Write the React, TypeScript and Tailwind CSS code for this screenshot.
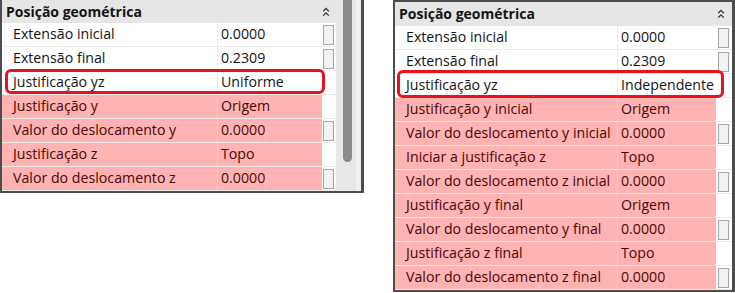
import React from 'react';

type Row = { label: string; value: string; box?: boolean; pink?: boolean; mark?: boolean };

const leftRows: Row[] = [
  { label: 'Extensão inicial', value: '0.0000', box: true },
  { label: 'Extensão final', value: '0.2309', box: true },
  { label: 'Justificação yz', value: 'Uniforme', mark: true },
  { label: 'Justificação y', value: 'Origem', pink: true },
  { label: 'Valor do deslocamento y', value: '0.0000', box: true, pink: true },
  { label: 'Justificação z', value: 'Topo', pink: true },
  { label: 'Valor do deslocamento z', value: '0.0000', box: true, pink: true },
];

const rightRows: Row[] = [
  { label: 'Extensão inicial', value: '0.0000', box: true },
  { label: 'Extensão final', value: '0.2309', box: true },
  { label: 'Justificação yz', value: 'Independente', mark: true },
  { label: 'Justificação y inicial', value: 'Origem', pink: true },
  { label: 'Valor do deslocamento y inicial', value: '0.0000', box: true, pink: true },
  { label: 'Iniciar a justificação z', value: 'Topo', pink: true },
  { label: 'Valor do deslocamento z inicial', value: '0.0000', box: true, pink: true },
  { label: 'Justificação y final', value: 'Origem', pink: true },
  { label: 'Valor do deslocamento y final', value: '0.0000', box: true, pink: true },
  { label: 'Justificação z final', value: 'Topo', pink: true },
  { label: 'Valor do deslocamento z final', value: '0.0000', box: true, pink: true },
];

function CollapseIcon() {
  return (
    <svg width="8" height="10" viewBox="0 0 8 10" fill="none" stroke="#333" strokeWidth="1.3">
      <path d="M1.2 4.2 L4 1.4 L6.8 4.2" />
      <path d="M1.2 8.6 L4 5.8 L6.8 8.6" />
    </svg>
  );
}

function PropRow({ row, wide }: { row: Row; wide?: boolean }) {
  const line = row.pink ? 'border-[#ffc6c6]' : 'border-[#ebebeb]';
  return (
    <div className="relative flex h-[24px] border-b border-[#ebebeb]">
      <div
        className={`flex items-center pl-[11px] whitespace-nowrap border-r ${line} ${
          wide ? 'w-[223px]' : 'w-[216px]'
        } ${row.pink ? 'bg-[#ffb3b3] text-[#4c0606]' : 'text-[#141414]'}`}
      >
        {row.label}
      </div>
      <div
        className={`flex items-center pl-[3px] whitespace-nowrap ${wide ? 'w-[98px]' : 'w-[104px]'} ${
          row.pink ? 'bg-[#ffb3b3] text-[#4c0606]' : 'text-[#141414]'
        }`}
      >
        {row.value}
      </div>
      <div className={`flex ${wide ? 'w-[16px] pl-[2px]' : 'w-[14px] pl-[1px]'} pt-[2px] pb-[1px]`}>
        {row.box && <div className="w-[11px] h-full border border-[#a6a6a6] bg-[#f2f2f2]" />}
      </div>
      {row.mark && (
        <div
          className={`absolute border-[3px] border-[#e3141c] rounded-[6px] ${
            wide ? 'left-[2px] right-[8px] top-[-4px] bottom-[-1px]' : 'left-[3px] right-[11px] top-[-2px] bottom-[0px]'
          }`}
        />
      )}
    </div>
  );
}

function Header({ wide }: { wide?: boolean }) {
  return (
    <div
      className={`flex items-center justify-between bg-[#e6e6e6] pl-[4px] ${
        wide ? 'h-[24px] pr-[7px]' : 'h-[23px] pr-[6px]'
      }`}
    >
      <span className="font-bold text-[14px] text-[#141414]">Posição geométrica</span>
      <CollapseIcon />
    </div>
  );
}

export default function App() {
  return (
    <div
      className="w-[735px] h-[293px] bg-white flex items-start text-[14.2px] leading-none"
      style={{ fontFamily: '"Open Sans", "Noto Sans", sans-serif' }}
    >
      {/* Left: Uniforme */}
      <div className="w-[364px] flex border-l-2 border-b-2 border-r-[3px] border-[#4d4d4d]">
        <div className="w-[334px] flex flex-col">
          <Header />
          {leftRows.map((r) => (
            <PropRow key={r.label} row={r} />
          ))}
        </div>
        <div className="w-[25px] flex bg-[#e8e8e8]">
          <div className="w-[18px] pl-[7px]">
            <div className="w-[9px] h-[162px] bg-[#8a8a8a] rounded-b-full" />
          </div>
          <div className="flex-1 bg-[#f1f1f1] ml-[2px]" />
        </div>
      </div>

      {/* Right: Independente */}
      <div className="ml-[29px] w-[342px] flex flex-col border-t-2 border-l-2 border-b-2 border-r-[3px] border-[#4d4d4d]">
        <Header wide />
        {rightRows.map((r) => (
          <PropRow key={r.label} row={r} wide />
        ))}
      </div>
    </div>
  );
}
